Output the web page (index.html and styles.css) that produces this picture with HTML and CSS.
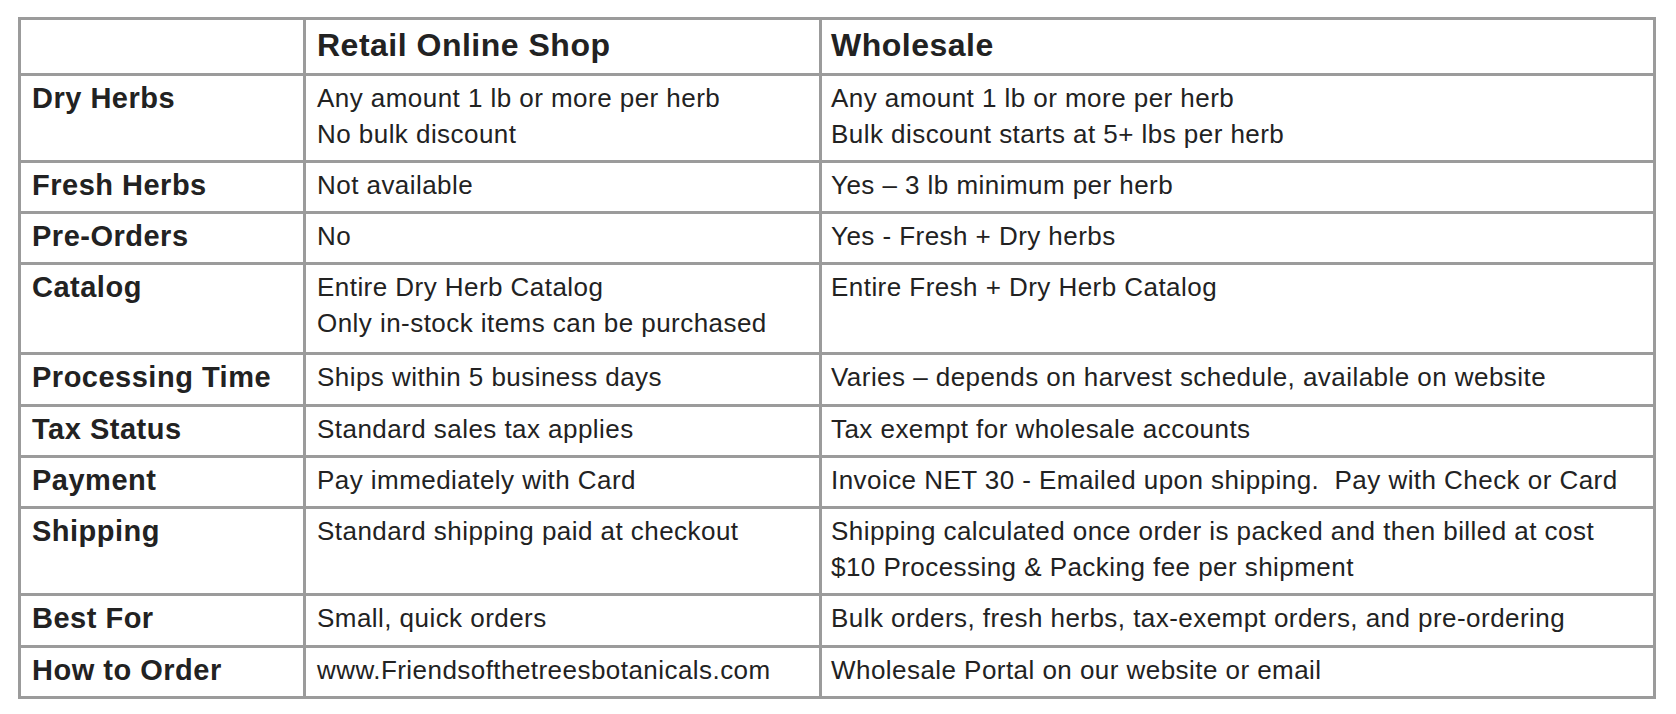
FILE: index.html
```html
<!DOCTYPE html>
<html lang="en">
<head>
<meta charset="utf-8">
<title>Retail vs Wholesale</title>
<link rel="stylesheet" href="styles.css">
</head>
<body>
<table class="compare">
  <colgroup>
    <col class="c-label">
    <col class="c-retail">
    <col class="c-whole">
  </colgroup>
  <thead>
    <tr class="head">
      <th></th>
      <th>Retail Online Shop</th>
      <th>Wholesale</th>
    </tr>
  </thead>
  <tbody>
    <tr>
      <th>Dry Herbs</th>
      <td>Any amount 1 lb or more per herb<br>No bulk discount</td>
      <td>Any amount 1 lb or more per herb<br>Bulk discount starts at 5+ lbs per herb</td>
    </tr>
    <tr>
      <th>Fresh Herbs</th>
      <td>Not available</td>
      <td>Yes – 3 lb minimum per herb</td>
    </tr>
    <tr>
      <th>Pre-Orders</th>
      <td>No</td>
      <td>Yes - Fresh + Dry herbs</td>
    </tr>
    <tr class="roomy">
      <th>Catalog</th>
      <td>Entire Dry Herb Catalog<br>Only in-stock items can be purchased</td>
      <td>Entire Fresh + Dry Herb Catalog</td>
    </tr>
    <tr class="roomy-sm">
      <th>Processing Time</th>
      <td>Ships within 5 business days</td>
      <td>Varies – depends on harvest schedule, available on website</td>
    </tr>
    <tr>
      <th>Tax Status</th>
      <td>Standard sales tax applies</td>
      <td>Tax exempt for wholesale accounts</td>
    </tr>
    <tr>
      <th>Payment</th>
      <td>Pay immediately with Card</td>
      <td>Invoice NET 30 - Emailed upon shipping.&nbsp; Pay with Check or Card</td>
    </tr>
    <tr>
      <th>Shipping</th>
      <td>Standard shipping paid at checkout</td>
      <td>Shipping calculated once order is packed and then billed at cost<br>$10 Processing &amp; Packing fee per shipment</td>
    </tr>
    <tr class="roomy-sm">
      <th>Best For</th>
      <td>Small, quick orders</td>
      <td>Bulk orders, fresh herbs, tax-exempt orders, and pre-ordering</td>
    </tr>
    <tr>
      <th>How to Order</th>
      <td>www.Friendsofthetreesbotanicals.com</td>
      <td>Wholesale Portal on our website or email</td>
    </tr>
  </tbody>
</table>
</body>
</html>
```

FILE: styles.css
```css
html, body {
  margin: 0;
  padding: 0;
  background: #ffffff;
}

body {
  padding: 17px 0 0 18px;
  font-family: "Liberation Sans", Arial, Helvetica, sans-serif;
  color: #222222;
}

.compare {
  border-collapse: collapse;
  table-layout: fixed;
  width: 1638px;
  border: 3px solid #9b9b9b;
}

.c-label { width: 285px; }
.c-retail { width: 516px; }
.c-whole { width: auto; }

.compare th,
.compare td {
  border: 3px solid #9b9b9b;
  padding: 4px 10px 8px 11px;
  vertical-align: top;
  text-align: left;
  line-height: 36px;
  white-space: nowrap;
}

.compare td {
  font-size: 26px;
  font-weight: 400;
  letter-spacing: 0.45px;
}

.compare td:last-child,
.compare th:last-child {
  padding-left: 9px;
}

.compare tbody th {
  font-size: 29px;
  font-weight: 700;
  letter-spacing: 0.5px;
}

.compare .head th {
  font-size: 32px;
  font-weight: 700;
  letter-spacing: 0.5px;
  padding-top: 7px;
  padding-bottom: 10px;
}

.compare .roomy th,
.compare .roomy td {
  padding-bottom: 11px;
}

.compare .roomy-sm th,
.compare .roomy-sm td {
  padding-bottom: 9px;
}
```
